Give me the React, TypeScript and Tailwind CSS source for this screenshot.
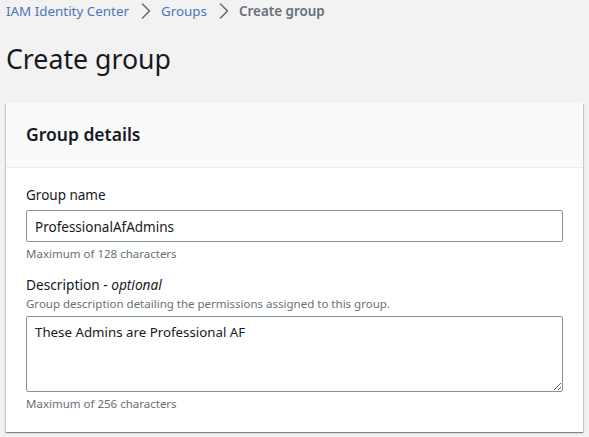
import { ChevronRight } from 'lucide-react'

const font = { fontFamily: '"Noto Sans", sans-serif' }

export default function App() {
    return (
        <div style={font} className="h-[437px] w-[589px] overflow-hidden bg-[#f2f2f2] text-[#16191f]">
            {/* Breadcrumbs */}
            <nav className="flex h-[22px] items-center pl-[6px] text-[13.4px] leading-[22px]">
                <a className="text-[#4f74b8]">IAM Identity Center</a>
                <ChevronRight className="ml-[3px] mr-[1px] h-[28px] w-[28px] text-[#687078]" strokeWidth={1.4} />
                <a className="text-[#4f74b8]">Groups</a>
                <ChevronRight className="ml-[3px] mr-[1px] h-[28px] w-[28px] text-[#687078]" strokeWidth={1.4} />
                <span className="font-semibold text-[#687078]">Create group</span>
            </nav>

            <h1 className="mt-[17px] pl-[6px] text-[26.7px] font-normal leading-[40px]">Create group</h1>

            {/* Group details card */}
            <section className="mx-[6px] mt-[24px] h-[329px] bg-white shadow-[0_1px_1px_0_rgba(0,28,36,0.3),1px_1px_1px_0_rgba(0,28,36,0.15),-1px_1px_1px_0_rgba(0,28,36,0.15)]">
                <header className="flex h-[65px] items-center border-b border-[#eaeded] bg-[#fafafa] px-[20px] pb-[3px]">
                    <h2 className="text-[17.5px] font-semibold leading-[22px]">Group details</h2>
                </header>

                <div className="px-[20px] pt-[16px]">
                    <label className="block text-[13.5px] leading-[22px]">Group name</label>
                    <input
                        readOnly
                        value="ProfessionalAfAdmins"
                        className="mt-[4px] block h-[32px] w-full rounded-[2px] border border-[#879596] bg-white px-[8px] pt-[1px] text-[13.5px] outline-none"
                    />
                    <p className="mt-[3px] text-[11.5px] leading-[18px] text-[#687078]">Maximum of 128 characters</p>

                    <label className="mt-[12px] block text-[13.7px] leading-[20px]">
                        Description - <i>optional</i>
                    </label>
                    <p className="mt-[1px] text-[11.5px] leading-[16px] text-[#687078]">
                        Group description detailing the permissions assigned to this group.
                    </p>
                    <textarea
                        readOnly
                        value="These Admins are Professional AF"
                        className="mt-[4px] block h-[76px] w-full rounded-[2px] border border-[#879596] bg-white px-[8px] py-[5px] text-[13.3px] leading-[20px] outline-none"
                    />
                    <p className="mt-[3px] text-[11.5px] leading-[18px] text-[#687078]">Maximum of 256 characters</p>
                </div>
            </section>
        </div>
    )
}
